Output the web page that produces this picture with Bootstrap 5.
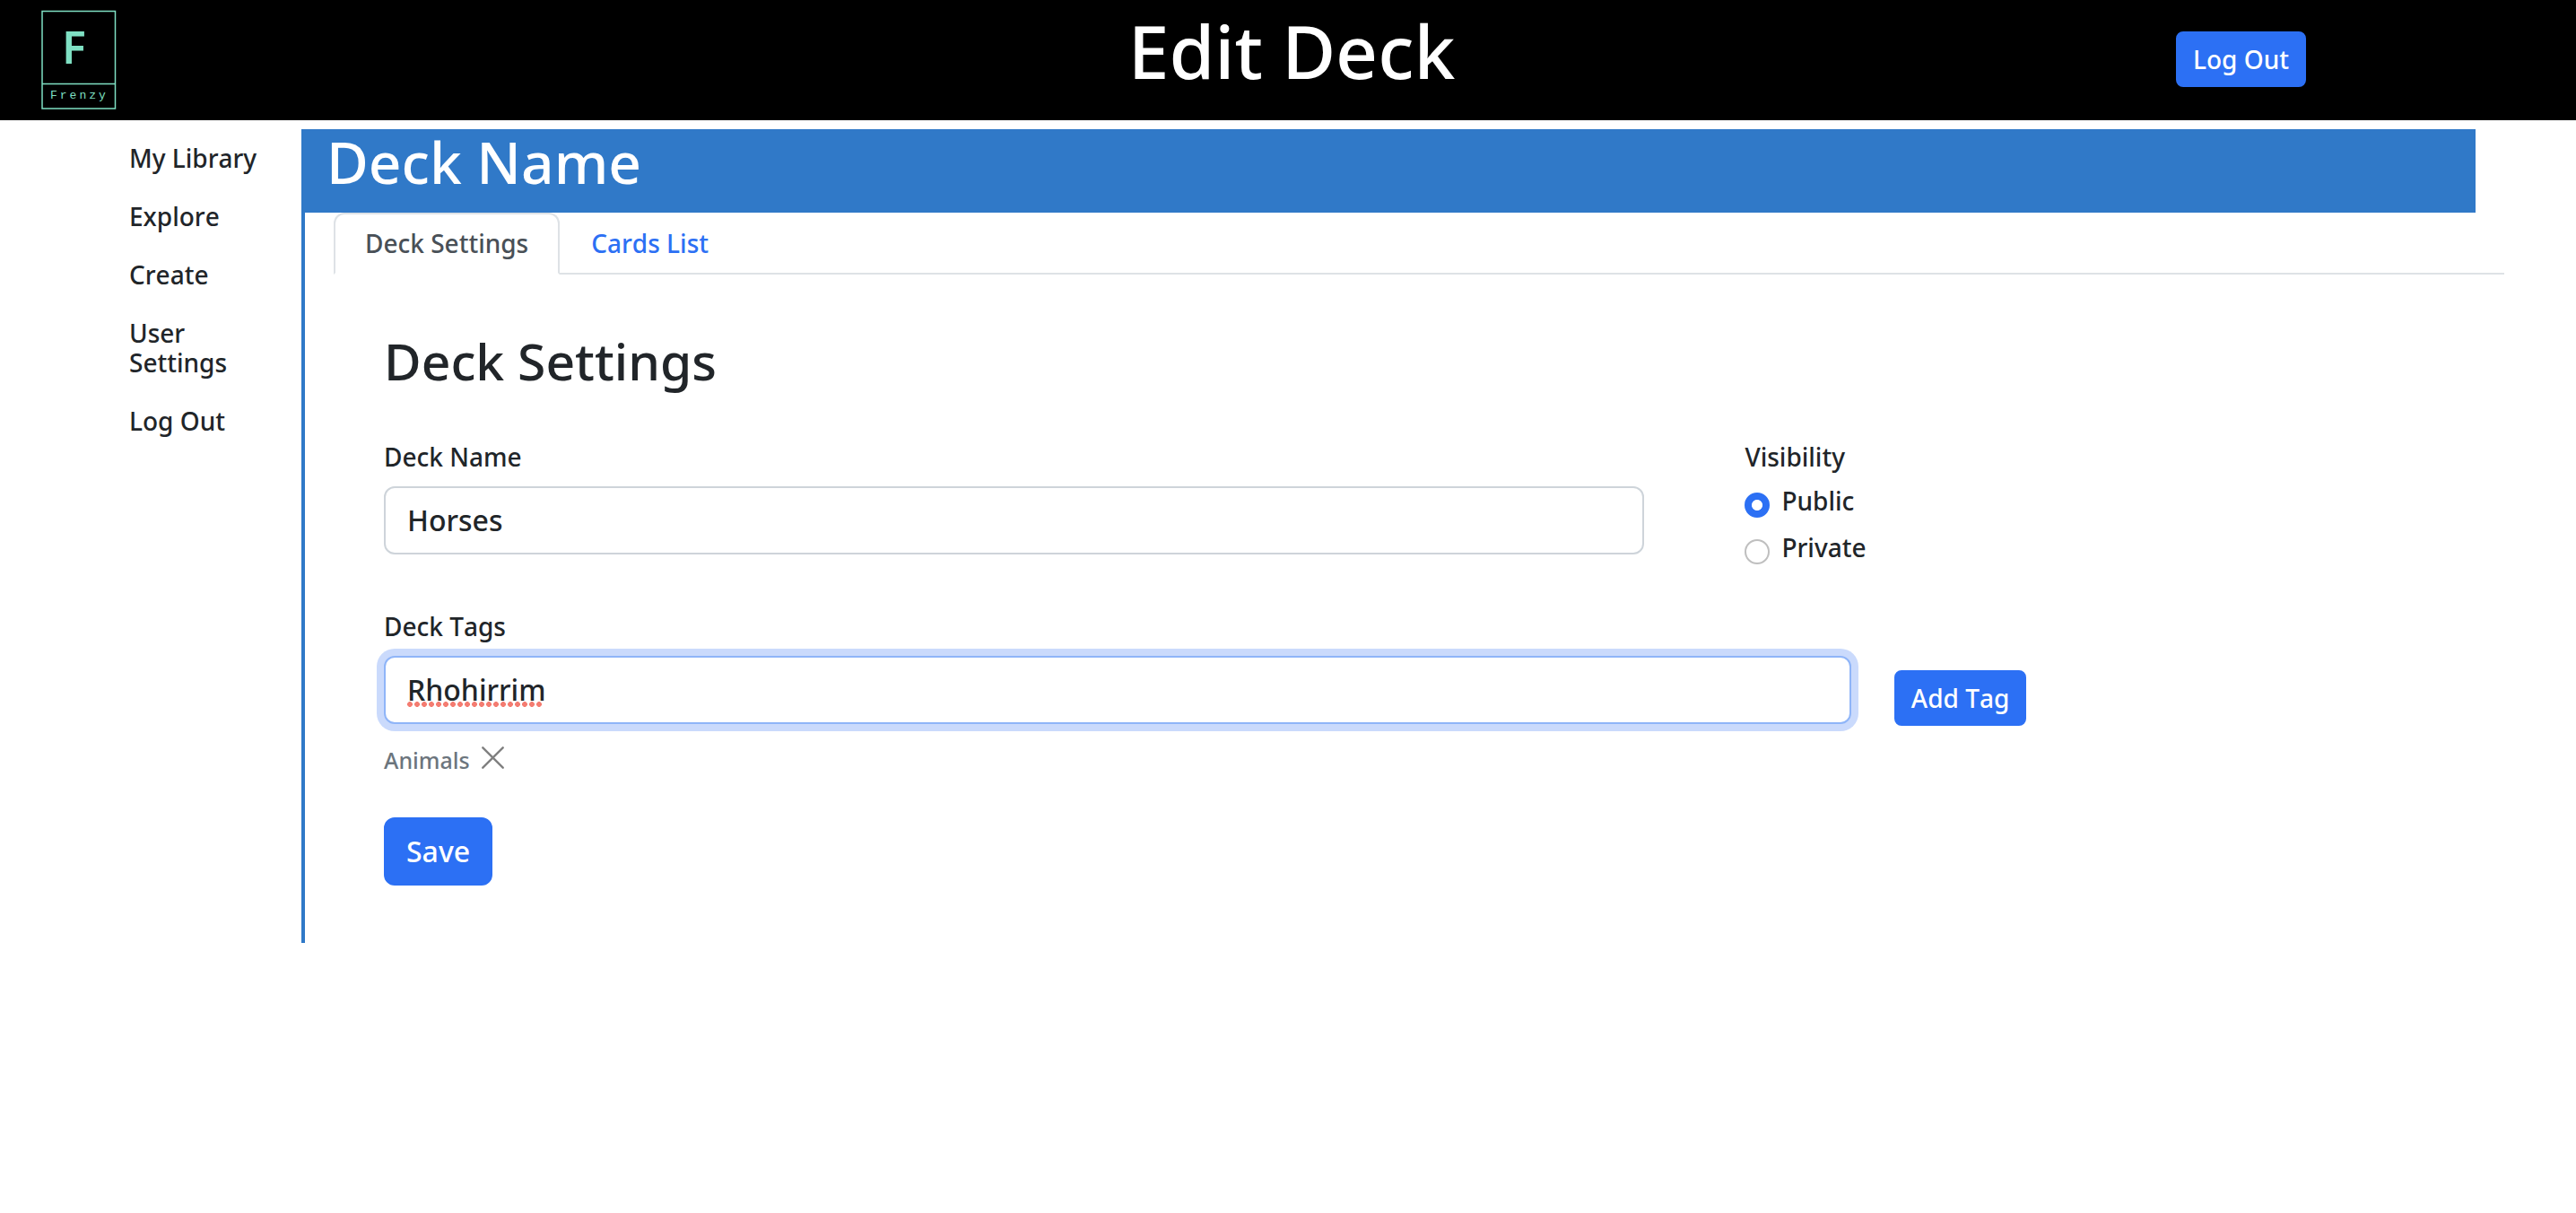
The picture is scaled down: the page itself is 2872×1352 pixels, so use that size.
<!DOCTYPE html>
<html lang="en">
<head>
<meta charset="utf-8">
<meta name="viewport" content="width=device-width, initial-scale=1">
<title>Edit Deck</title>
<link href="https://cdn.jsdelivr.net/npm/bootstrap@5.3.0/dist/css/bootstrap.min.css" rel="stylesheet">
<style>
  body { font-family: "Noto Sans", "Open Sans", sans-serif; font-size: 28px; line-height: 42px; font-weight: 500; font-kerning: none; color: #212529; background: #fff; }
  h1, h2, h3 { font-weight: 500; margin: 0; }

  .site-head { background: #000; color: #fff; display: grid; grid-template-columns: 1fr auto 1fr; padding: 0 36px 0 44px; height: 134px; }
  .site-head h1 { font-size: 82px; line-height: 98px; padding-top: 7px; }
  .site-logo { width: 84px; height: 112px; margin: 11px 0 0 2px; }
  .logout-slot { padding: 35px 265px 0 0; }

  .btn-primary { --bs-btn-bg: #2c70f4; --bs-btn-border-color: #2c70f4; }
  .btn-std { font-size: 28px; line-height: 42px; font-weight: 500; font-kerning: none; padding: 8px 17px; border-width: 2px; border-radius: 8px; }
  .btn-std.btn-tall { font-size: 32px; line-height: 48px; padding: 12px 23px; border-radius: 12px; }

  .page-body { padding: 0 112px; }
  .side-nav { width: 224px; padding: 26px 32px 0; gap: 32px; }
  .side-nav a { color: #212529; text-decoration: none; line-height: 33px; }

  .deck-panel { margin-top: 10px; border-left: 4px solid #3079c8; min-width: 0; }
  .deck-title { background: #3079c8; color: #fff; font-size: 64px; line-height: 74px; padding: 0 24px 19px; }
  .deck-inner { margin: 0 -32px 0 32px; }
  .deck-tabs { border-bottom: 2px solid #dee2e6; }
  .deck-tabs .nav-link { font-size: 28px; line-height: 41px; padding: 12px 33px; border-width: 2px; border-radius: 12px 12px 0 0; margin-bottom: -2px; color: #2c70f4; }
  .deck-tabs .nav-link.active { color: #495057; }

  .deck-form { padding: 62px 60px 64px 56px; }
  .deck-form h3 { font-size: 57px; line-height: 68px; margin-bottom: 52px; }
  .field-name { width: 61%; }
  .field-tags { width: 71%; }
  .row-name { column-gap: 112px; margin-bottom: 46px; }
  .row-tags { column-gap: 48px; }
  .row-tags .btn { margin-top: 70px; }
  .field-label { display: block; margin-bottom: 12px; }
  .deck-form .form-control { font-size: 32px; line-height: 48px; font-weight: 500; font-kerning: none; padding: 12px 24px; border: 2px solid #ced4da; border-radius: 12px; color: #212529; }
  .deck-form .form-control.is-focused { border-color: #8fb5f8; box-shadow: 0 0 0 8px #cadafc; }
  .spell-line { position: absolute; left: 26px; bottom: 19px; width: 152px; height: 6px; background: radial-gradient(circle at 3px 3px, #f47c71 0 2.6px, transparent 3.2px) 0 0 / 8px 6px repeat-x; pointer-events: none; }

  .vis-set legend { font-size: 28px; line-height: 42px; margin-bottom: 7px; float: none; }
  .vis-opt { display: flex; column-gap: 13px; margin-bottom: 10px; }
  .vis-opt:last-child { margin-bottom: 0; }
  .vis-opt .form-check-input { width: 28px; height: 28px; margin: 12px 0 0; border: 2px solid #bfbfbf; flex: none; }
  .vis-opt .form-check-input:checked { background-color: #2c70f4; border-color: #2c70f4; background-image: radial-gradient(circle, #fff 0 5.6px, transparent 6.4px); }

  .tag-line { margin: 19px 0 45px; font-size: 25px; line-height: 38px; color: #6c757d; column-gap: 13px; }
  .tag-drop { border: 0; background: none; padding: 4px 0 0; line-height: 0; color: #808080; }
</style>
</head>
<body>
<header class="site-head">
  <a href="#" aria-label="Frenzy" class="d-block">
    <svg class="site-logo d-block" viewBox="0 0 84 112" fill="none" stroke="#7fe0c3">
      <rect x="1" y="1.5" width="81.5" height="108.5" stroke-width="1.5"/>
      <path d="M1 82.5H82.5" stroke-width="1.5"/>
      <text x="23" y="60" font-family="Noto Sans, sans-serif" font-size="50" font-weight="600" fill="#7fe0c3" stroke="none">F</text>
      <text x="10" y="99" font-family="Liberation Mono, monospace" font-size="13" letter-spacing="3" fill="#7fe0c3" stroke="none">Frenzy</text>
    </svg>
  </a>
  <h1>Edit Deck</h1>
  <div class="logout-slot d-flex justify-content-end align-items-start">
    <button type="button" class="btn btn-primary btn-std">Log Out</button>
  </div>
</header>

<div class="page-body d-flex align-items-start">
  <nav class="side-nav d-flex flex-column flex-shrink-0" aria-label="Main">
    <a href="#">My Library</a>
    <a href="#">Explore</a>
    <a href="#">Create</a>
    <a href="#">User Settings</a>
    <a href="#">Log Out</a>
  </nav>

  <main class="deck-panel flex-grow-1">
    <h2 class="deck-title">Deck Name</h2>
    <div class="deck-inner">
      <ul class="nav nav-tabs deck-tabs">
        <li class="nav-item"><a class="nav-link active" aria-current="page" href="#">Deck Settings</a></li>
        <li class="nav-item"><a class="nav-link" href="#">Cards List</a></li>
      </ul>

      <form class="deck-form">
        <h3>Deck Settings</h3>
        <div class="row-name d-flex align-items-start">
          <div class="field-name">
            <label class="field-label" for="deckName">Deck Name</label>
            <input class="form-control" id="deckName" type="text" value="Horses">
          </div>
          <fieldset class="vis-set">
            <legend>Visibility</legend>
            <div class="vis-opt">
              <input class="form-check-input" type="radio" name="visibility" id="visPublic" checked>
              <label for="visPublic">Public</label>
            </div>
            <div class="vis-opt">
              <input class="form-check-input" type="radio" name="visibility" id="visPrivate">
              <label for="visPrivate">Private</label>
            </div>
          </fieldset>
        </div>

        <div class="row-tags d-flex align-items-start">
          <div class="field-tags">
            <label class="field-label" for="deckTags">Deck Tags</label>
            <div class="position-relative">
              <input class="form-control is-focused" id="deckTags" type="text" value="Rhohirrim" spellcheck="false">
              <span class="spell-line" aria-hidden="true"></span>
            </div>
          </div>
          <button type="button" class="btn btn-primary btn-std">Add Tag</button>
        </div>

        <div class="tag-line d-flex align-items-start">
          <span>Animals</span>
          <button type="button" class="tag-drop" aria-label="Remove Animals">
            <svg width="25" height="25" viewBox="0 0 25 25" fill="none" stroke="currentColor" stroke-width="2.4" stroke-linecap="round"><path d="M1.3 1.3 23.7 23.7M23.7 1.3 1.3 23.7"/></svg>
          </button>
        </div>

        <button type="submit" class="btn btn-primary btn-std btn-tall">Save</button>
      </form>
    </div>
  </main>
</div>
<script src="https://cdn.jsdelivr.net/npm/bootstrap@5.3.0/dist/js/bootstrap.bundle.min.js"></script>
</body>
</html>
